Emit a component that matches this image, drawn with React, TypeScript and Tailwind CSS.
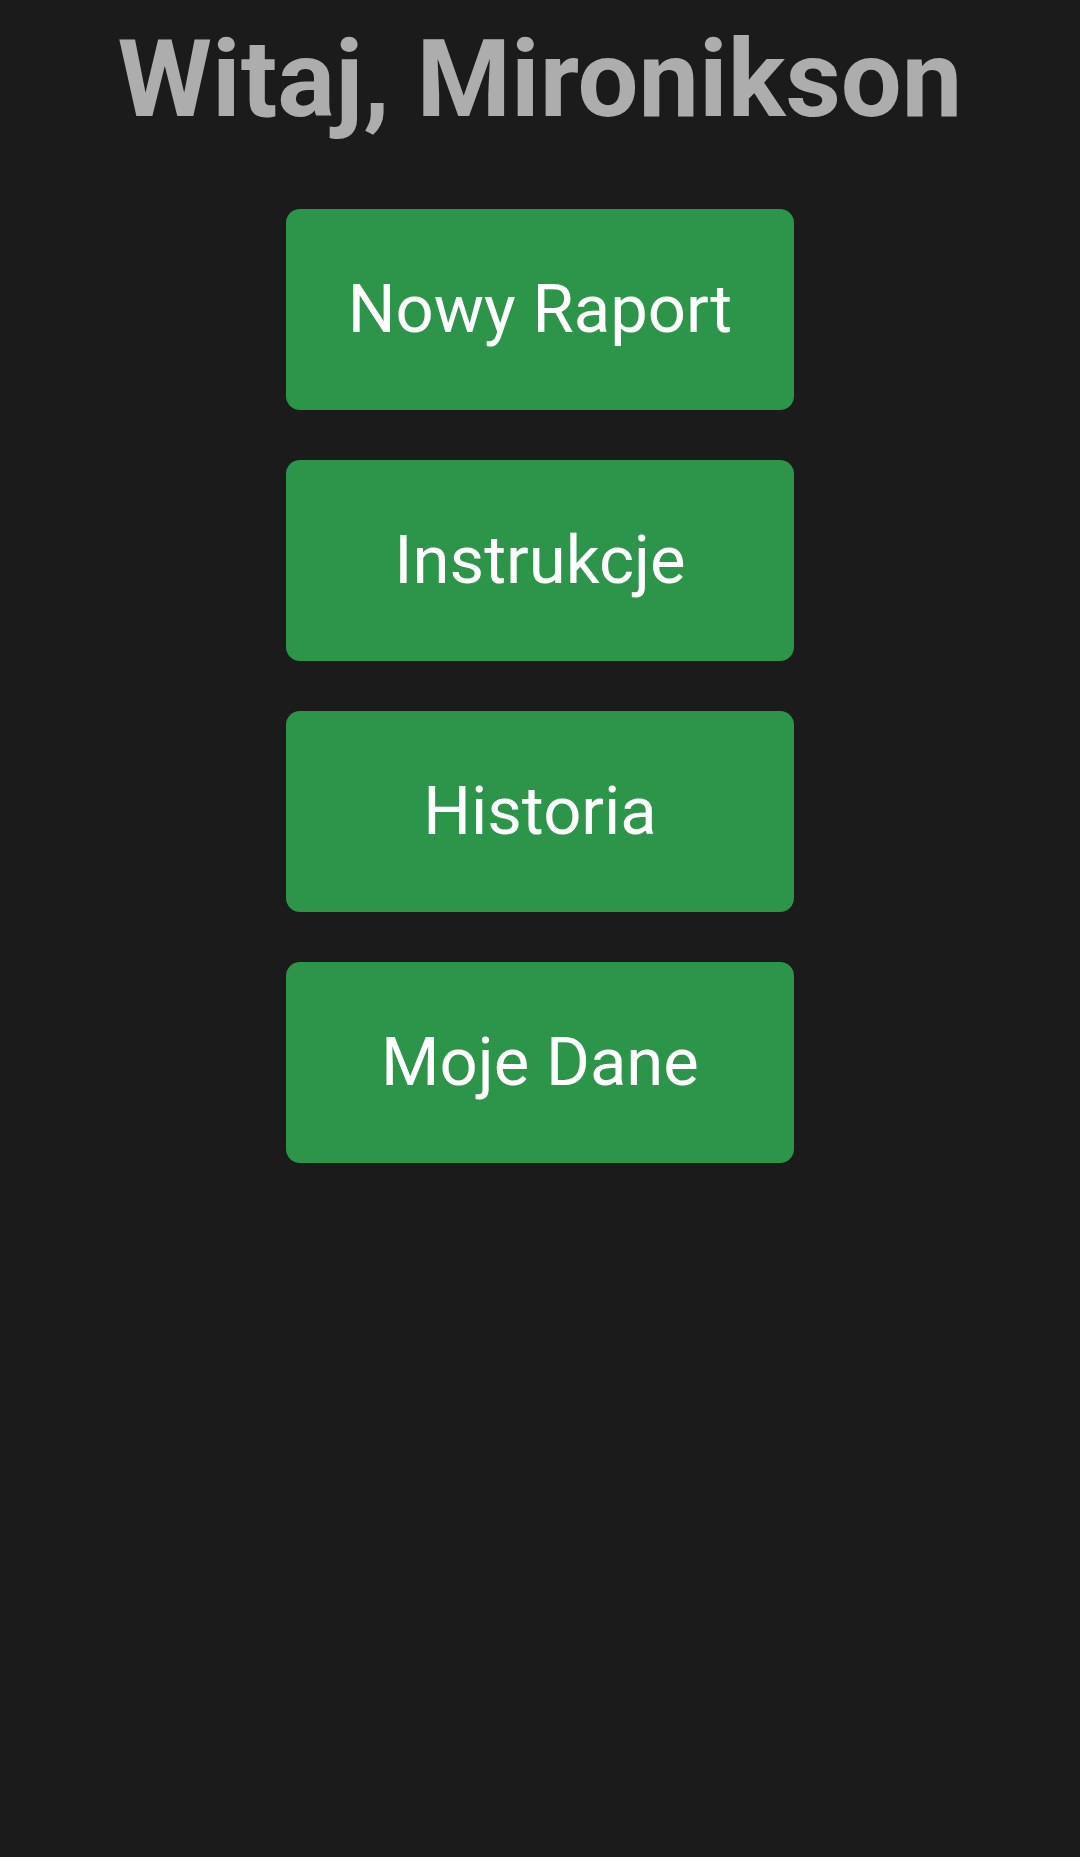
import React from "react";

const items = ["Nowy Raport", "Instrukcje", "Historia", "Moje Dane"];

const App: React.FC = () => {
  return (
    <div className="min-h-[1857px] w-full bg-[#1b1b1b] font-['Roboto',sans-serif] flex flex-col items-center pt-[24px]">
      <h1 className="text-[108px] leading-[110px] font-bold text-[#adadad] text-center">Witaj, Mironikson</h1>
      <div className="mt-[75px] flex flex-col gap-[50px]">
        {items.map((label) => (
          <button
            key={label}
            className="w-[508px] h-[201px] rounded-[14px] bg-[#2c9549] text-white text-[67px] font-normal flex items-center justify-center"
          >
            {label}
          </button>
        ))}
      </div>
    </div>
  );
};

export default App;
